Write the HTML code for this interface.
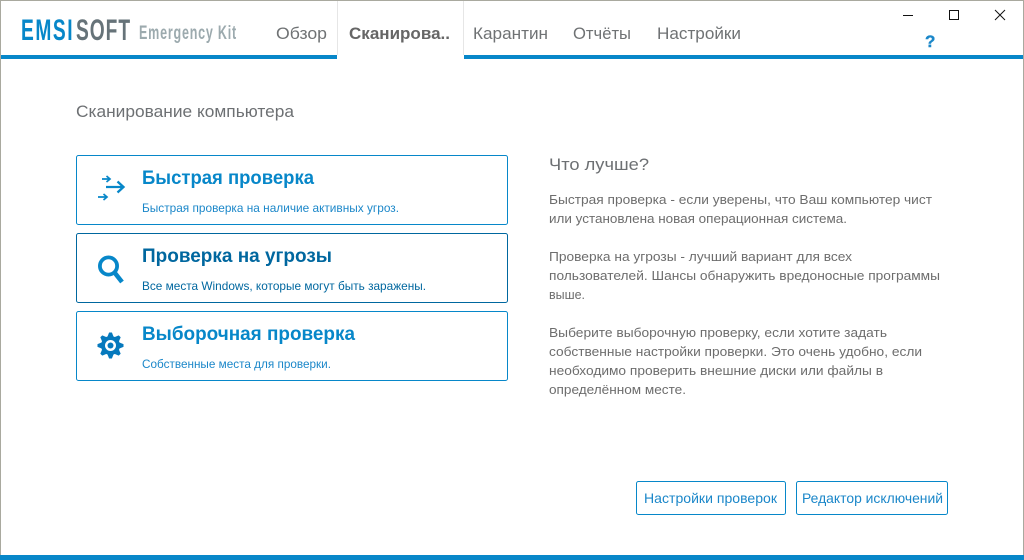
<!DOCTYPE html>
<html lang="ru"><head><meta charset="utf-8"><title>Emsisoft Emergency Kit</title>
<style>
html,body{margin:0;padding:0;background:#fff}
svg{display:block}
text{font-family:"Liberation Sans","DejaVu Sans",sans-serif;white-space:pre}
.b{font-size:13px;fill:#6d6d6d}
.t{font-size:17px;fill:#6f7274}
.h{font-size:19px;font-weight:bold}
.s{font-size:12px}
.btn{font-size:14px;fill:#1b87c9}
</style></head><body>
<svg xmlns="http://www.w3.org/2000/svg" width="1024" height="560" viewBox="0 0 1024 560">
<rect width="1024" height="560" fill="#fff"/>
<rect x="0" y="55" width="1024" height="4" fill="#0787c9"/>
<rect x="0" y="555" width="1024" height="5" fill="#0787c9"/>
<rect x="337" y="1" width="127" height="58" fill="#fff"/>
<rect x="337" y="1" width="1" height="54" fill="#e6e6e6"/>
<rect x="463" y="1" width="1" height="54" fill="#e6e6e6"/>
<rect x="0" y="0" width="1024" height="1" fill="#a9a99f"/>
<rect x="0" y="0" width="1" height="555" fill="#a9a99f"/>
<rect x="1023" y="0" width="1" height="555" fill="#a9a99f"/>

<text transform="translate(21 40) scale(.64 1)" font-size="30" font-weight="bold" fill="#0787c9" letter-spacing="2.4">EMSI</text>
<text transform="translate(76 40) scale(.64 1)" font-size="30" font-weight="bold" fill="#667379" letter-spacing="1.5">SOFT</text>
<text transform="translate(139 39) scale(.66 1)" font-size="19" font-weight="bold" fill="#9caaae" letter-spacing="1.2">Emergency Kit</text>

<text class="t" x="276" y="39" textLength="51" lengthAdjust="spacingAndGlyphs">Обзор</text>
<text class="t" x="349" y="39" style="font-weight:bold;fill:#666" textLength="101" lengthAdjust="spacingAndGlyphs">Сканирова..</text>
<text class="t" x="473" y="39" textLength="75" lengthAdjust="spacingAndGlyphs">Карантин</text>
<text class="t" x="573" y="39" textLength="58" lengthAdjust="spacingAndGlyphs">Отчёты</text>
<text class="t" x="657" y="39" textLength="84" lengthAdjust="spacingAndGlyphs">Настройки</text>

<rect x="903" y="15" width="10" height="1" fill="#111"/>
<rect x="949.5" y="10.5" width="9" height="9" fill="none" stroke="#111"/>
<path d="M995 10L1005 20M1005 10L995 20" stroke="#111" fill="none"/>
<text x="925" y="47" font-size="17" font-weight="bold" fill="#1b87c9" stroke="#1b87c9" stroke-width=".4">?</text>

<text x="76" y="117" font-size="17" fill="#6d7073" textLength="218" lengthAdjust="spacingAndGlyphs">Сканирование компьютера</text>

<rect x="76.5" y="155.5" width="431" height="69" rx="2" fill="#fff" stroke="#0787c9"/>
<rect x="76.5" y="233.5" width="431" height="69" rx="2" fill="#fff" stroke="#00679f"/>
<rect x="76.5" y="311.5" width="431" height="69" rx="2" fill="#fff" stroke="#0787c9"/>

<g fill="none" stroke="#0787c9">
<path d="M102 179H109M106.5 176L110 179L106.5 182" stroke-width="1.7"/>
<path d="M106 187H123M117.5 181.5L123.5 187L117.5 192.5" stroke-width="2.3"/>
<path d="M98 197H106M103.5 194L107 197L103.5 200" stroke-width="1.7"/>
</g>
<circle cx="108.5" cy="266" r="8.6" fill="none" stroke="#0787c9" stroke-width="3.8"/>
<path d="M114.5 272.5L122 282" stroke="#0787c9" stroke-width="4.6" fill="none"/>
<g transform="translate(110.5 345.5)">
<g fill="#0679bd">
<circle r="9.5"/>
<path d="M-1.4-13H1.4L3.8-7H-3.8Z"/>
<path d="M-1.4-13H1.4L3.8-7H-3.8Z" transform="rotate(45)"/>
<path d="M-1.4-13H1.4L3.8-7H-3.8Z" transform="rotate(90)"/>
<path d="M-1.4-13H1.4L3.8-7H-3.8Z" transform="rotate(135)"/>
<path d="M-1.4-13H1.4L3.8-7H-3.8Z" transform="rotate(180)"/>
<path d="M-1.4-13H1.4L3.8-7H-3.8Z" transform="rotate(225)"/>
<path d="M-1.4-13H1.4L3.8-7H-3.8Z" transform="rotate(270)"/>
<path d="M-1.4-13H1.4L3.8-7H-3.8Z" transform="rotate(315)"/>
</g>
<circle r="5.5" fill="#fff"/>
<circle r="3" fill="#0679bd"/>
</g>

<text class="h" x="142" y="184" fill="#0787c9" textLength="172" lengthAdjust="spacingAndGlyphs">Быстрая проверка</text>
<text class="s" x="142" y="212" fill="#1b87c9" textLength="257" lengthAdjust="spacingAndGlyphs">Быстрая проверка на наличие активных угроз.</text>
<text class="h" x="142" y="262" fill="#00679f" textLength="190" lengthAdjust="spacingAndGlyphs">Проверка на угрозы</text>
<text class="s" x="142" y="290" fill="#00679f" textLength="284" lengthAdjust="spacingAndGlyphs">Все места Windows, которые могут быть заражены.</text>
<text class="h" x="142" y="340" fill="#0787c9" textLength="213" lengthAdjust="spacingAndGlyphs">Выборочная проверка</text>
<text class="s" x="142" y="368" fill="#1b87c9" textLength="189" lengthAdjust="spacingAndGlyphs">Собственные места для проверки.</text>

<text x="549" y="170" font-size="17" fill="#6d7073" textLength="100" lengthAdjust="spacingAndGlyphs">Что лучше?</text>
<text class="b" x="549" y="204" textLength="383" lengthAdjust="spacingAndGlyphs">Быстрая проверка - если уверены, что Ваш компьютер чист</text>
<text class="b" x="549" y="223" textLength="298" lengthAdjust="spacingAndGlyphs">или установлена новая операционная система.</text>
<text class="b" x="549" y="261" textLength="303" lengthAdjust="spacingAndGlyphs">Проверка на угрозы - лучший вариант для всех</text>
<text class="b" x="549" y="280" textLength="391" lengthAdjust="spacingAndGlyphs">пользователей. Шансы обнаружить вредоносные программы</text>
<text class="b" x="549" y="299" textLength="36" lengthAdjust="spacingAndGlyphs">выше.</text>
<text class="b" x="549" y="337" textLength="338" lengthAdjust="spacingAndGlyphs">Выберите выборочную проверку, если хотите задать</text>
<text class="b" x="549" y="356" textLength="373" lengthAdjust="spacingAndGlyphs">собственные настройки проверки. Это очень удобно, если</text>
<text class="b" x="549" y="375" textLength="334" lengthAdjust="spacingAndGlyphs">необходимо проверить внешние диски или файлы в</text>
<text class="b" x="549" y="394" textLength="137" lengthAdjust="spacingAndGlyphs">определённом месте.</text>

<rect x="636.5" y="481.5" width="149" height="33" rx="2" fill="#fff" stroke="#0787c9"/>
<rect x="796.5" y="481.5" width="151" height="33" rx="2" fill="#fff" stroke="#0787c9"/>
<text class="btn" x="644" y="503" textLength="133" lengthAdjust="spacingAndGlyphs">Настройки проверок</text>
<text class="btn" x="802" y="503" textLength="141" lengthAdjust="spacingAndGlyphs">Редактор исключений</text>
</svg>
</body></html>
